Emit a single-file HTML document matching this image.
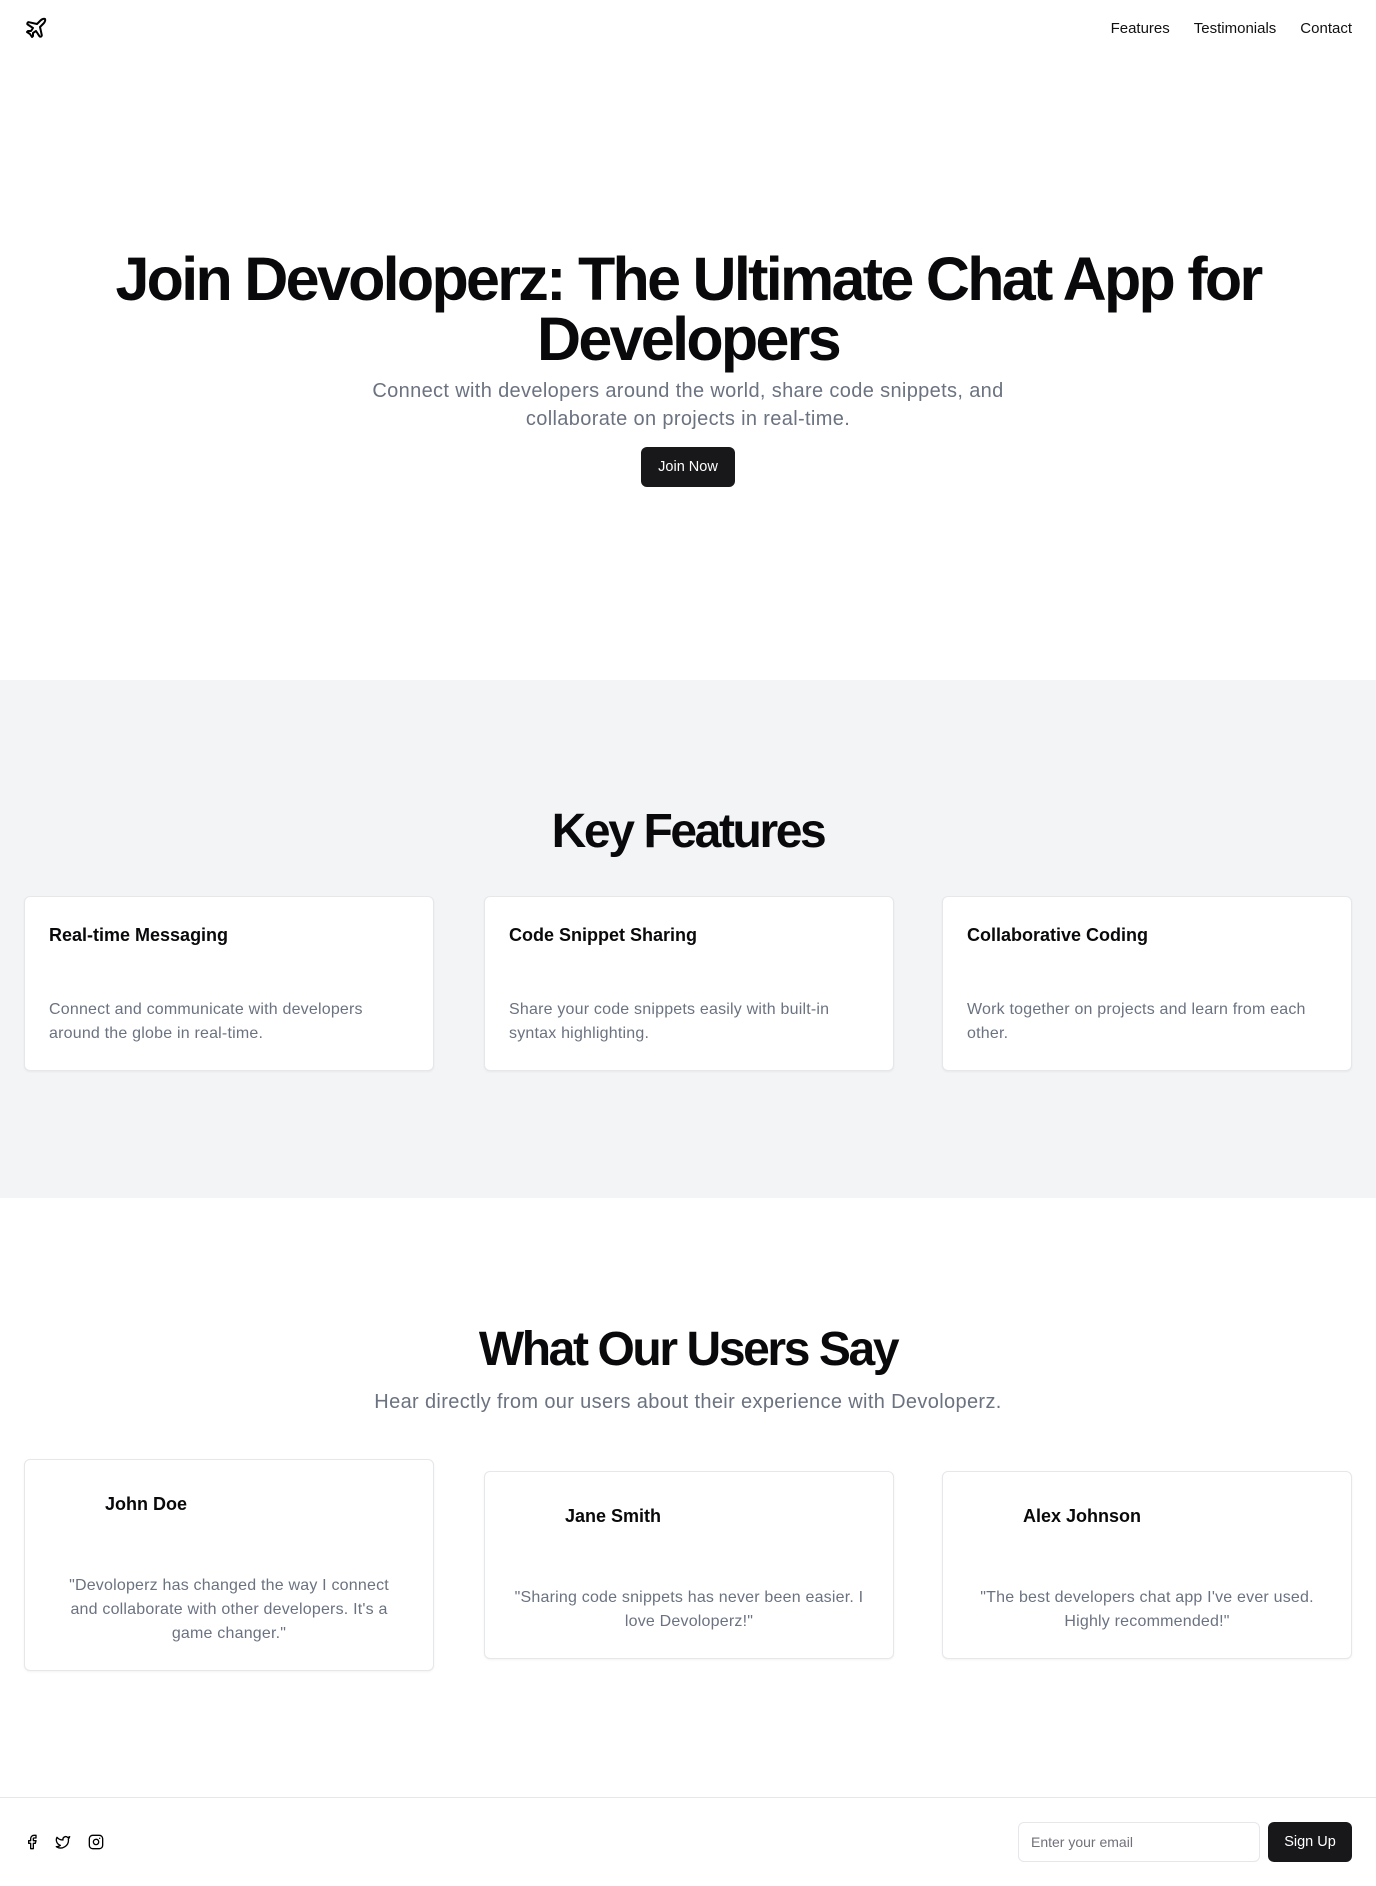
<!DOCTYPE html>
<html><head><meta charset="utf-8"><style>
*{box-sizing:border-box;margin:0;padding:0}
body{width:1376px;height:1886px;font-family:"Liberation Sans",sans-serif;color:#09090b;background:#fff;position:relative;overflow:hidden}
.nav{position:absolute;top:0;left:0;right:0;height:56px}
.logo{position:absolute;left:24px;top:16px}
.links{position:absolute;right:24px;top:20px;font-size:15px;display:flex;gap:24px;color:#111}
h1{position:absolute;top:249px;left:0;right:0;text-align:center;font-size:61px;line-height:60px;font-weight:700;letter-spacing:-2.7px}
.sub{position:absolute;top:377px;left:0;right:0;text-align:center;font-size:20px;line-height:28px;color:#6b7280;letter-spacing:.35px}
.btn{position:absolute;left:641px;top:447px;width:94px;height:40px;background:#18181b;color:#fff;border-radius:6px;font-size:14.5px;display:flex;align-items:center;justify-content:center}
.gray{position:absolute;top:680px;left:0;right:0;height:518px;background:#f3f4f6}
h2{position:absolute;left:0;right:0;text-align:center;font-size:48px;font-weight:700;letter-spacing:-2.4px;line-height:56px}
.card{position:absolute;width:410px;background:#fff;border:1px solid #e5e7eb;border-radius:6px;box-shadow:0 1px 2px rgba(0,0,0,.05);padding:24px}
.card h3{font-size:18px;line-height:28px;font-weight:700}
.card p{font-size:16px;line-height:24px;color:#6b7280;margin-top:49px;letter-spacing:.2px}
.t .hd{display:flex;align-items:center;height:40px;padding-left:56px;font-size:18px;font-weight:700}
.t p{text-align:center;margin-top:50px;font-size:16px;line-height:24px;color:#6b7280}
.foot{position:absolute;top:1797px;left:0;right:0;height:89px;border-top:1px solid #e5e7eb}
.inp{position:absolute;left:1018px;top:24px;width:242px;height:40px;border:1px solid #e5e7eb;border-radius:6px;font-size:14px;color:#71717a;padding:11px 12px}
.sb{position:absolute;left:1268px;top:24px;width:84px;height:40px;background:#18181b;color:#fff;border-radius:6px;font-size:14.5px;display:flex;align-items:center;justify-content:center}
svg{fill:none;stroke:#000;stroke-width:2;stroke-linecap:round;stroke-linejoin:round}
</style></head><body>
<div class="nav">
<svg class="logo" width="24" height="24" viewBox="0 0 24 24"><path d="M17.8 19.2 16 11l3.5-3.5C21 6 21.5 4 21 3c-1-.5-3 0-4.5 1.5L13 8 4.8 6.2c-.5-.1-.9.1-1.1.5l-.3.5c-.2.5-.1 1 .3 1.3L9 12l-2 3H4l-1 1 3 2 2 3 1-1v-3l3-2 3.5 5.3c.3.4.8.5 1.3.3l.5-.2c.4-.3.6-.7.5-1.2z"/></svg>
<div class="links"><span>Features</span><span>Testimonials</span><span>Contact</span></div>
</div>
<h1>Join Devoloperz: The Ultimate Chat App for<br>Developers</h1>
<div class="sub">Connect with developers around the world, share code snippets, and<br>collaborate on projects in real-time.</div>
<div class="btn">Join Now</div>
<div class="gray"></div>
<h2 style="top:804px">Key Features</h2>
<div class="card" style="left:24px;top:896px"><h3>Real-time Messaging</h3><p>Connect and communicate with developers around the globe in real-time.</p></div>
<div class="card" style="left:484px;top:896px"><h3>Code Snippet Sharing</h3><p>Share your code snippets easily with built-in syntax highlighting.</p></div>
<div class="card" style="left:942px;top:896px"><h3>Collaborative Coding</h3><p>Work together on projects and learn from each other.</p></div>
<h2 style="top:1322px">What Our Users Say</h2>
<div class="sub" style="top:1388px">Hear directly from our users about their experience with Devoloperz.</div>
<div class="card t" style="left:24px;top:1459px"><div class="hd">John Doe</div><p style="padding:0 12px">"Devoloperz has changed the way I connect and collaborate with other developers. It's a game changer."</p></div>
<div class="card t" style="left:484px;top:1471px"><div class="hd">Jane Smith</div><p>"Sharing code snippets has never been easier. I love Devoloperz!"</p></div>
<div class="card t" style="left:942px;top:1471px"><div class="hd">Alex Johnson</div><p>"The best developers chat app I've ever used. Highly recommended!"</p></div>
<div class="foot">
<svg style="position:absolute;left:24px;top:36px" width="16" height="16" viewBox="0 0 24 24"><path d="M18 2h-3a5 5 0 0 0-5 5v3H7v4h3v8h4v-8h3l1-4h-4V7a1 1 0 0 1 1-1h3z"/></svg>
<svg style="position:absolute;left:55px;top:36px" width="16" height="16" viewBox="0 0 24 24"><path d="M22 4s-.7 2.1-2 3.4c1.6 10-9.4 17.3-18 11.6 2.2.1 4.4-.6 6-2C3 15.5.5 9.6 3 5c2.2 2.6 5.6 4.1 9 4-.9-4.2 4-6.6 7-3.8 1.1 0 3-1.2 3-1.2z"/></svg>
<svg style="position:absolute;left:88px;top:36px" width="16" height="16" viewBox="0 0 24 24"><rect x="2" y="2" width="20" height="20" rx="5"/><path d="M16 11.37A4 4 0 1 1 12.63 8 4 4 0 0 1 16 11.37z"/><path d="M17.5 6.5h.01"/></svg>
<div class="inp">Enter your email</div>
<div class="sb">Sign Up</div>
</div>
</body></html>
